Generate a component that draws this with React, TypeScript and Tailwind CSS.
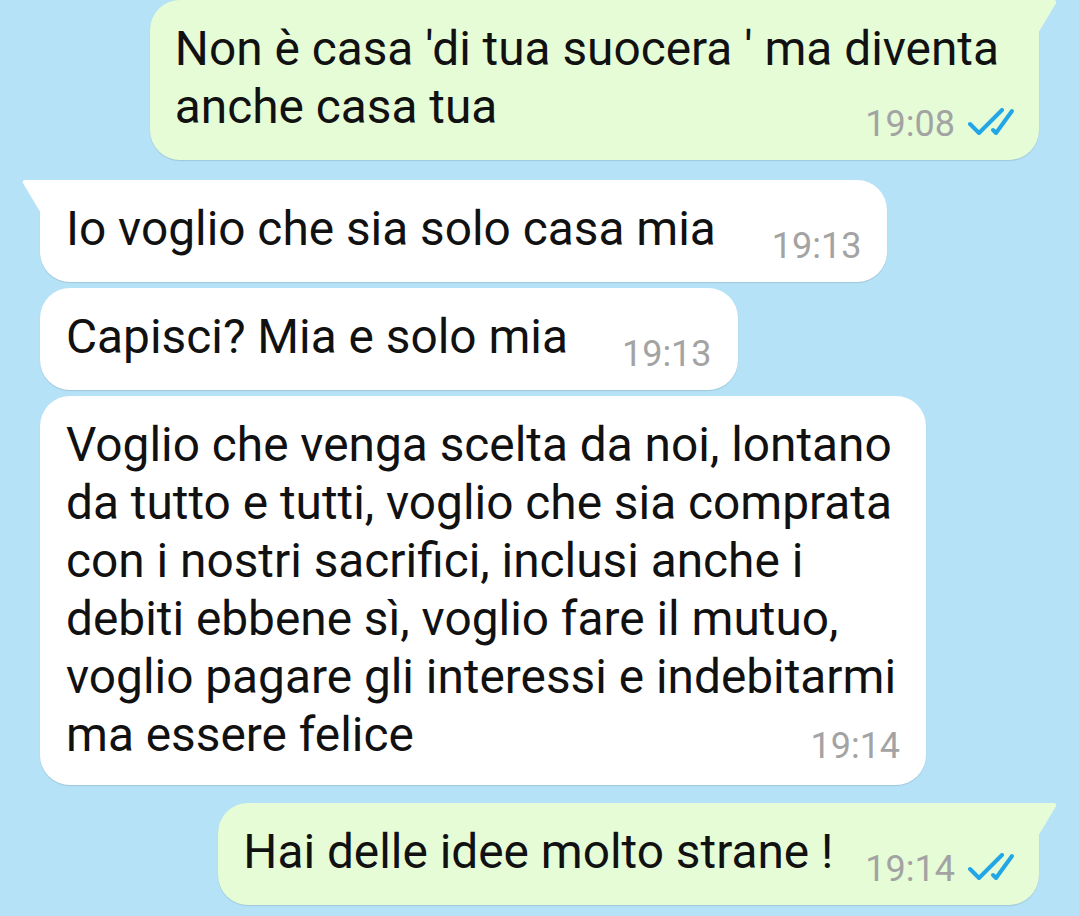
const roboto = "font-['Roboto','Noto_Sans',sans-serif]";

function Ticks() {
  return (
    <svg width="48" height="30" viewBox="0 0 48 30" className="mb-[6px] shrink-0">
      <path d="M3 16 L12 25 L35 2" fill="none" stroke="#22a6e6" strokeWidth="4" strokeLinecap="round" strokeLinejoin="round" />
      <path d="M26 22 L29 25 L45 3" fill="none" stroke="#22a6e6" strokeWidth="4" strokeLinecap="round" strokeLinejoin="round" />
    </svg>
  );
}

function Time({ t, read }: { t: string; read?: boolean }) {
  return (
    <div className="flex items-end gap-[12px] shrink-0">
      <span className="text-[36px] leading-[40px] text-[#a3a3a3]">{t}</span>
      {read && <Ticks />}
    </div>
  );
}

function OutTail() {
  return (
    <svg width="22" height="36" viewBox="0 0 22 36" className="absolute top-0 right-[-20px]">
      <path d="M0 0 H16 Q21 0 18.5 4 L0 35 Z" fill="#e5fcd7" />
    </svg>
  );
}

const outBox =
  "relative self-end mr-[40px] bg-[#e5fcd7] rounded-[30px] rounded-tr-none shadow-[0_1px_1px_rgba(0,0,0,0.12)] pt-[20px]";
const inBox =
  "relative self-start ml-[40px] bg-white shadow-[0_1px_1px_rgba(0,0,0,0.12)] pt-[20px] rounded-[30px]";

function In({ text, t, tail, gap }: { text: string; t: string; tail?: boolean; gap: string }) {
  return (
    <div className={inBox + " pl-[26px] pr-[26px] pb-[16px] flex items-end " + (tail ? "rounded-tl-none" : "")}>
      {tail && (
        <svg width="22" height="36" viewBox="0 0 22 36" className="absolute top-0 left-[-20px]">
          <path d="M22 0 H6 Q1 0 3.5 4 L22 35 Z" fill="#ffffff" />
        </svg>
      )}
      <div className={"pb-[8px] whitespace-nowrap " + gap}>{text}</div>
      <Time t={t} />
    </div>
  );
}

export default function App() {
  const long = [
    "Voglio che venga scelta da noi, lontano",
    "da tutto e tutti, voglio che sia comprata",
    "con i nostri sacrifici, inclusi anche i",
    "debiti ebbene sì, voglio fare il mutuo,",
    "voglio pagare gli interessi e indebitarmi",
    "ma essere felice",
  ];
  return (
    <div className={"w-[1079px] h-[916px] overflow-hidden bg-[#b5e2f7] text-[#111111] text-[47.8px] leading-[58px] flex flex-col " + roboto}>
      {/* first sent message: time sits under the long first line */}
      <div className={outBox + " pl-[25px] pr-[40px] pb-[16px] flex flex-col"}>
        <OutTail />
        <div className="whitespace-nowrap">
          <div>Non è casa 'di tua suocera ' ma diventa</div>
          <div>anche casa tua</div>
        </div>
        <div className="self-end -mt-[32px] mr-[-16px]">
          <Time t="19:08" read />
        </div>
      </div>
      <div className="h-[20px] shrink-0" />
      <In text="Io voglio che sia solo casa mia" t="19:13" tail gap="mr-[56px]" />
      <div className="h-[6px] shrink-0" />
      <In text="Capisci? Mia e solo mia" t="19:13" gap="mr-[54px]" />
      <div className="h-[6px] shrink-0" />
      <div className={inBox + " pl-[26px] pr-[30px] pb-[19px] flex flex-col"}>
        <div className="whitespace-nowrap">
          {long.map((l, i) => (
            <div key={i}>{l}</div>
          ))}
        </div>
        <div className="self-end -mt-[38px] mr-[-4px]">
          <Time t="19:14" />
        </div>
      </div>
      <div className="h-[18px] shrink-0" />
      <div className={outBox + " pl-[25px] pr-[24px] pb-[16px] flex items-end gap-[32px]"}>
        <OutTail />
        <div className="pb-[8px] whitespace-nowrap">Hai delle idee molto strane !</div>
        <Time t="19:14" read />
      </div>
    </div>
  );
}
